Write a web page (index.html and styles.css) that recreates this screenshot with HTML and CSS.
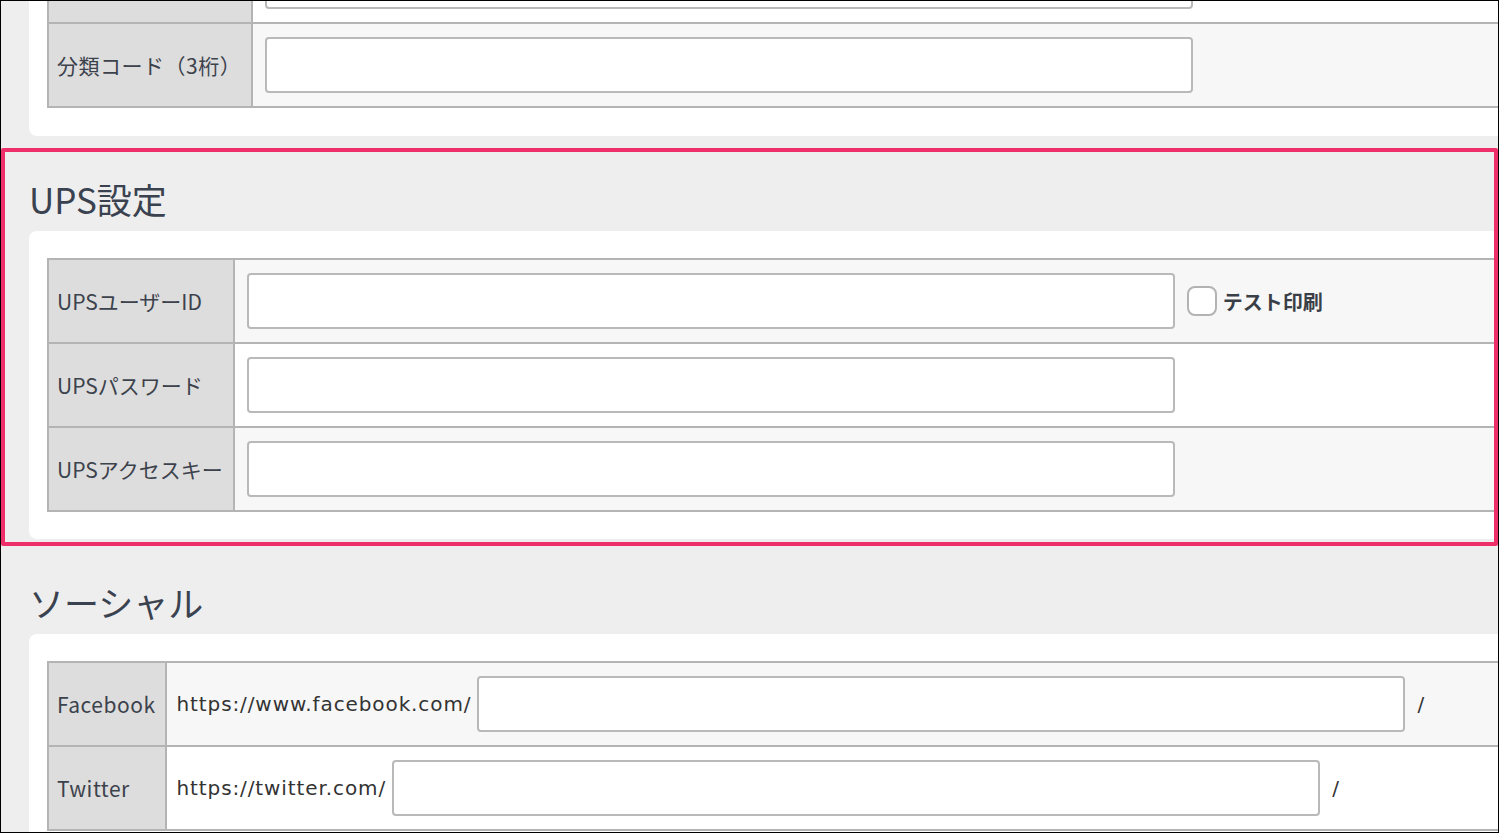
FILE: index.html
```html
<!DOCTYPE html>
<html lang="ja">
<head>
  <meta charset="UTF-8">
  <title>設定</title>
  <link rel="stylesheet" href="styles.css">
</head>
<body>
  <div class="frame">
    <div class="page">

      <section class="panel panel-first">
        <div class="card">
          <table class="form-table code-table">
            <tr>
              <th></th>
              <td><input type="text" class="field"></td>
            </tr>
            <tr>
              <th></th>
              <td><input type="text" class="field"></td>
            </tr>
            <tr>
              <th>分類コード（3桁）</th>
              <td><input type="text" class="field"></td>
            </tr>
          </table>
        </div>
      </section>

      <section class="panel">
        <h2 class="panel-title">UPS設定</h2>
        <div class="card">
          <table class="form-table">
            <tr>
              <th>UPSユーザーID</th>
              <td>
                <div class="cell-row">
                  <input type="text" class="field">
                  <label class="check">
                    <input type="checkbox" class="check-box">
                    <span>テスト印刷</span>
                  </label>
                </div>
              </td>
            </tr>
            <tr>
              <th>UPSパスワード</th>
              <td><input type="password" class="field"></td>
            </tr>
            <tr>
              <th>UPSアクセスキー</th>
              <td><input type="text" class="field"></td>
            </tr>
          </table>
        </div>
      </section>

      <section class="panel">
        <h2 class="panel-title">ソーシャル</h2>
        <div class="card">
          <table class="form-table social-table">
            <tr>
              <th>Facebook</th>
              <td>
                <div class="cell-row">
                  <span class="url">https://www.facebook.com/</span>
                  <input type="text" class="field">
                  <span class="slash">/</span>
                </div>
              </td>
            </tr>
            <tr>
              <th>Twitter</th>
              <td>
                <div class="cell-row">
                  <span class="url">https://twitter.com/</span>
                  <input type="text" class="field">
                  <span class="slash">/</span>
                </div>
              </td>
            </tr>
          </table>
        </div>
      </section>

    </div>

    <!-- annotation box around the UPS block -->
    <div class="highlight"></div>
  </div>
</body>
</html>
```

FILE: styles.css
```css
* {
  margin: 0;
  padding: 0;
  box-sizing: border-box;
}

body {
  background: #fff;
  font-family: "Noto Sans CJK JP", "Noto Sans", sans-serif;
  color: #3b414b;
}

.frame {
  position: relative;
  width: 1499px;
  height: 833px;
  border: 1px solid #000;
  background: #eeeeee;
  overflow: hidden;
}

.page {
  width: 1660px;
  margin-top: -174px;
  padding-left: 28px;
}

/* sections */
.panel-title {
  padding: 41px 0 10px 0;
  font-size: 35px;
  line-height: 44px;
  font-weight: normal;
  color: #3a4250;
}

.card {
  background: #fff;
  border-radius: 8px;
  padding: 27px 0 27px 18px;
}

.panel-first .card {
  padding-bottom: 28px;
}

/* tables */
.form-table {
  width: 100%;
  border-collapse: collapse;
  border: 2px solid #b4b4b4;
}

.form-table th,
.form-table td {
  border: 2px solid #b4b4b4;
  height: 84px;
  vertical-align: middle;
}

.form-table th {
  width: 1px;
  white-space: nowrap;
  padding: 0 10px 0 8px;
  background: #dddddd;
  font-size: 21px;
  font-weight: normal;
  text-align: left;
  color: #3c424c;
}

.code-table th {
  letter-spacing: 0.5px;
}

.social-table th {
  letter-spacing: 0.5px;
}

.form-table td {
  padding: 12px 12px;
  background: #fff;
}

.form-table tr:nth-child(odd) td {
  background: #f7f7f7;
}

.field {
  display: block;
  width: 928px;
  height: 56px;
  border: 2px solid #b9b9b9;
  border-radius: 4px;
  background: #fff;
  font: inherit;
  padding: 0 10px;
}

.cell-row {
  display: flex;
  align-items: center;
}

/* test print checkbox */
.check {
  display: flex;
  align-items: center;
  margin-left: 12px;
  font-size: 20px;
  font-weight: bold;
  color: #3a3f47;
}

.check-box {
  appearance: none;
  -webkit-appearance: none;
  width: 30px;
  height: 30px;
  border: 2px solid #b3b3b3;
  border-radius: 8px;
  background: #fff;
  margin-right: 6px;
}

/* social urls */
.url {
  font-family: "DejaVu Sans", "Noto Sans", sans-serif;
  font-size: 20px;
  letter-spacing: 0.9px;
  color: #333;
  white-space: nowrap;
  margin-left: -3px;
  margin-right: 6px;
}

.slash {
  font-family: "DejaVu Sans", "Noto Sans", sans-serif;
  font-size: 20px;
  color: #333;
  margin-left: 12px;
}

.highlight {
  position: absolute;
  left: 0;
  top: 147px;
  width: 1497px;
  height: 398px;
  border: 4px solid #ee2f6a;
  border-radius: 2px;
  pointer-events: none;
}
```
